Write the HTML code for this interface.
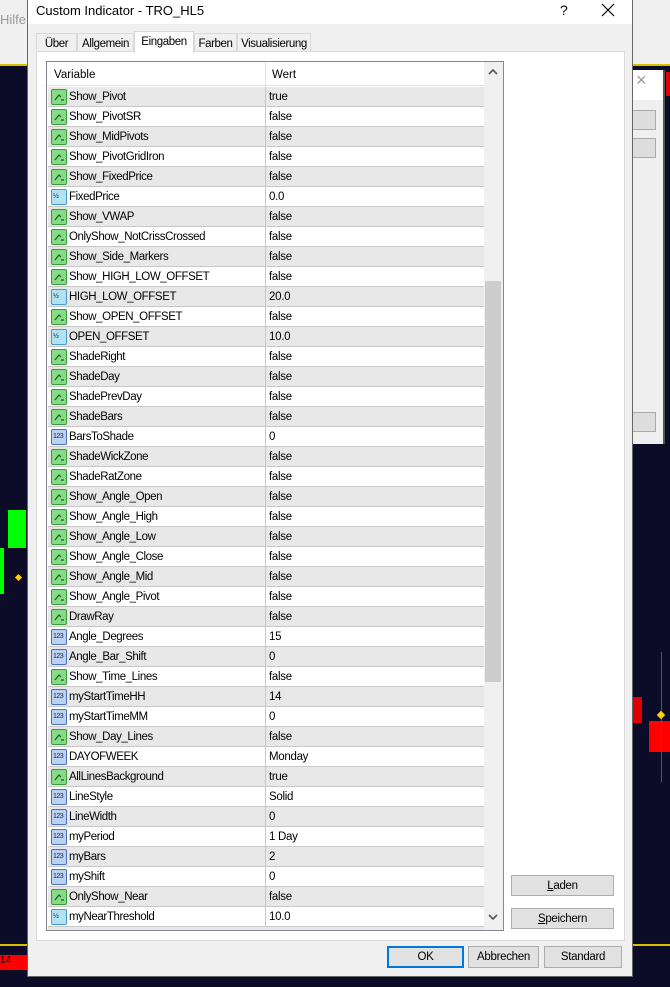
<!DOCTYPE html>
<html><head><meta charset="utf-8"><style>
*{margin:0;padding:0;box-sizing:border-box}
body{width:670px;height:987px;position:relative;overflow:hidden;background:#0c0c28;font-family:"Liberation Sans",sans-serif;font-size:11.5px;color:#000}
.a{position:absolute}
.row{position:absolute;left:48px;width:436px;height:20px;border-bottom:1px solid #c8c8c8}
.row .n{position:absolute;left:21px;top:4px;letter-spacing:-0.4px}
.row .v{position:absolute;left:221px;top:4px;letter-spacing:-0.3px}
.row .sep{position:absolute;left:217px;top:0;width:1px;height:20px;background:#c8c8c8}
.ic{position:absolute;left:3px;top:2px;width:16px;height:16px;border-radius:2px}
.g{background:#86dc86;border:1px solid #3a9a3a}
.h{background:#b0e2f2;border:1px solid #4a9ac8}
.i{background:#bcd2f2;border:1px solid #4a70b8}
.ic span{position:absolute;left:1px;top:3px;font-size:7px;color:#224;letter-spacing:-0.5px}
.g svg{position:absolute;left:2px;top:3px}
.btn{position:absolute;background:#e1e1e1;border:1px solid #adadad;text-align:center;line-height:20px;font-size:11.5px;letter-spacing:-0.3px}
.tab{position:absolute;top:33px;height:19px;border:1px solid #d9d9d9;background:#f0f0f0;padding-top:4px;text-align:center;letter-spacing:-0.4px}
</style></head><body>
<div class="a" style="left:0;top:0;width:670px;height:65px;background:#f0f0f0"></div>
<div class="a" style="left:0;top:12px;color:#999;font-size:13px">Hilfe</div>
<div class="a" style="left:0;top:64px;width:670px;height:2px;background:#d8c000"></div>
<div class="a" style="left:8px;top:510px;width:18px;height:38px;background:#00ff00"></div>
<div class="a" style="left:0;top:548px;width:4px;height:46px;background:#00ff00"></div>
<div class="a" style="left:16px;top:575px;width:5px;height:5px;background:#ffd000;transform:rotate(45deg)"></div>
<div class="a" style="left:0;top:944px;width:670px;height:2px;background:#d8c000"></div>
<div class="a" style="left:0;top:955px;width:28px;height:15px;background:#ff0000;color:#000;font-size:10px">14</div>
<div class="a" style="left:632px;top:697px;width:10px;height:26px;background:#e00000"></div>
<div class="a" style="left:649px;top:721px;width:21px;height:31px;background:#ff0000"></div>
<div class="a" style="left:661px;top:652px;width:1px;height:130px;background:#d02020"></div>
<div class="a" style="left:658px;top:712px;width:6px;height:6px;background:#ffd000;transform:rotate(45deg)"></div>
<div class="a" style="left:666px;top:72px;width:4px;height:24px;background:#e00000"></div>
<div class="a" style="left:632px;top:70px;width:33px;height:374px;background:#efefef;border-right:2px solid #555"></div>
<div class="a" style="left:632px;top:70px;width:31px;height:30px;background:#fff;color:#999;font-size:18px;padding-left:4px">×</div>
<div class="a" style="left:632px;top:110px;width:24px;height:20px;background:#ddd;border:1px solid #aaa"></div>
<div class="a" style="left:632px;top:138px;width:24px;height:20px;background:#ddd;border:1px solid #aaa"></div>
<div class="a" style="left:632px;top:412px;width:24px;height:20px;background:#ddd;border:1px solid #aaa"></div>
<div class="a" style="left:27px;top:0;width:606px;height:977px;background:#f0f0f0;border:1px solid #666;border-top:none"></div>
<div class="a" style="left:28px;top:0;width:604px;height:24px;background:#fff"></div>
<div class="a" style="left:36px;top:3px;font-size:13px">Custom Indicator - TRO_HL5</div>
<div class="a" style="left:560px;top:2px;font-size:14px">?</div>
<svg class="a" style="left:601px;top:3px" width="14" height="14"><path d="M1 1L13 13M13 1L1 13" stroke="#000" stroke-width="1.2"/></svg>
<div class="a" style="left:36px;top:51px;width:589px;height:890px;background:#fff;border:1px solid #d9d9d9"></div>
<div class="tab" style="left:36px;width:41px">Über</div>
<div class="tab" style="left:77px;width:57px">Allgemein</div>
<div class="tab" style="left:134px;top:31px;width:60px;height:22px;border-bottom:none;background:#fff">Eingaben</div>
<div class="tab" style="left:194px;width:43px">Farben</div>
<div class="tab" style="left:237px;width:74px">Visualisierung</div>
<div class="a" style="left:46px;top:61px;width:458px;height:870px;border:1px solid #828790;background:#fff"></div>
<div class="a" style="left:47px;top:62px;width:437px;height:24px;background:#fff;border-bottom:1px solid #e0e0e0"></div>
<div class="a" style="left:54px;top:69px">Variable</div>
<div class="a" style="left:265px;top:62px;width:1px;height:24px;background:#e0e0e0"></div>
<div class="a" style="left:272px;top:69px">Wert</div>
<div class="a" style="left:484px;top:62px;width:19px;height:868px;background:#f0f0f0"></div>
<div class="a" style="left:485px;top:281px;width:16px;height:401px;background:#cdcdcd"></div>
<svg class="a" style="left:488px;top:68px" width="10" height="7"><path d="M1 6L5 2L9 6" stroke="#555" stroke-width="1.6" fill="none"/></svg>
<svg class="a" style="left:488px;top:914px" width="10" height="7"><path d="M1 1L5 5L9 1" stroke="#555" stroke-width="1.6" fill="none"/></svg>
<div id="rows"></div>
<script>
var d=[["g","Show_Pivot","true"],["g","Show_PivotSR","false"],["g","Show_MidPivots","false"],["g","Show_PivotGridIron","false"],["g","Show_FixedPrice","false"],["h","FixedPrice","0.0"],["g","Show_VWAP","false"],["g","OnlyShow_NotCrissCrossed","false"],["g","Show_Side_Markers","false"],["g","Show_HIGH_LOW_OFFSET","false"],["h","HIGH_LOW_OFFSET","20.0"],["g","Show_OPEN_OFFSET","false"],["h","OPEN_OFFSET","10.0"],["g","ShadeRight","false"],["g","ShadeDay","false"],["g","ShadePrevDay","false"],["g","ShadeBars","false"],["i","BarsToShade","0"],["g","ShadeWickZone","false"],["g","ShadeRatZone","false"],["g","Show_Angle_Open","false"],["g","Show_Angle_High","false"],["g","Show_Angle_Low","false"],["g","Show_Angle_Close","false"],["g","Show_Angle_Mid","false"],["g","Show_Angle_Pivot","false"],["g","DrawRay","false"],["i","Angle_Degrees","15"],["i","Angle_Bar_Shift","0"],["g","Show_Time_Lines","false"],["i","myStartTimeHH","14"],["i","myStartTimeMM","0"],["g","Show_Day_Lines","false"],["i","DAYOFWEEK","Monday"],["g","AllLinesBackground","true"],["i","LineStyle","Solid"],["i","LineWidth","0"],["i","myPeriod","1 Day"],["i","myBars","2"],["i","myShift","0"],["g","OnlyShow_Near","false"],["h","myNearThreshold","10.0"]];
var h="";
d.forEach(function(r,k){var y=87+k*20;var bg=k%2==0?"#e8e8e8":"#fff";
var inner=r[0]=="g"?'<svg width="11" height="8"><path d="M1 7L5 2L7 4M7 7H10" stroke="#1a5a1a" stroke-width="1.2" fill="none"/></svg>':'<span>'+(r[0]=="h"?"½":"123")+'</span>';
h+='<div class="row" style="top:'+y+'px;background:'+bg+'"><div class="ic '+r[0]+'">'+inner+'</div><div class="n">'+r[1]+'</div><div class="sep"></div><div class="v">'+r[2]+'</div></div>';});
h+='<div class="row" style="top:927px;height:3px;background:#e8e8e8;border:none"></div>';
document.getElementById("rows").innerHTML=h;
</script>
<div class="btn" style="left:511px;top:875px;width:103px;height:21px"><u>L</u>aden</div>
<div class="btn" style="left:511px;top:908px;width:103px;height:21px"><u>S</u>peichern</div>
<div class="btn" style="left:387px;top:946px;width:77px;height:22px;border:2px solid #0078d7;line-height:18px">OK</div>
<div class="btn" style="left:468px;top:946px;width:71px;height:22px">Abbrechen</div>
<div class="btn" style="left:544px;top:946px;width:78px;height:22px">Standard</div>
</body></html>
